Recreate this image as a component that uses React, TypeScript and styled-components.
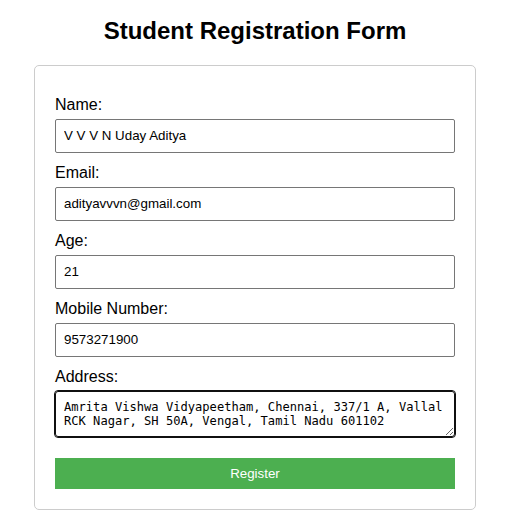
import React from "react";
import styled, { createGlobalStyle } from "styled-components";

const GlobalStyle = createGlobalStyle`
  html, body { margin: 0; padding: 0; background: #ffffff; }
  body { font-family: "Liberation Sans", Arial, sans-serif; color: #000; }
  * { box-sizing: border-box; }
`;

const Page = styled.div`
  padding: 17px 1px 20px 0;
`;

const Title = styled.h2`
  margin: 0 0 20px;
  text-align: center;
  font-size: 24px;
  font-weight: bold;
  line-height: 27.6px;
`;

const Card = styled.form`
  width: 442px;
  margin: 0 auto;
  padding: 20px;
  border: 1px solid #cccccc;
  border-radius: 5px;
  background: #ffffff;
`;

const Label = styled.label`
  display: block;
  margin: 9px 0 5px;
  font-size: 16px;
  line-height: 19px;
`;

const Input = styled.input`
  display: block;
  width: 100%;
  height: 34px;
  margin: 0 0 10px;
  padding: 0 8px;
  border: 1px solid #767676;
  border-radius: 2px;
  font-family: "Liberation Sans", Arial, sans-serif;
  font-size: 13.33px;
  color: #000;
  background: #fff;
  outline: none;
`;

const TextArea = styled.textarea`
  display: block;
  width: 100%;
  height: 46px;
  margin: 0;
  padding: 8px;
  border: 1px solid #101010;
  border-radius: 3px;
  outline: 1px solid #101010;
  outline-offset: 0;
  font-family: "DejaVu Sans Mono", "Liberation Mono", monospace;
  font-size: 12.1px;
  line-height: 14px;
  color: #000;
  background: #fff;
  resize: vertical;
  overflow: hidden;
`;

const Button = styled.button`
  display: block;
  width: 100%;
  margin-top: 21px;
  padding: 8px;
  border: none;
  background: #4caf50;
  color: #ffffff;
  font-family: "Liberation Sans", Arial, sans-serif;
  font-size: 13.33px;
  line-height: 15px;
  cursor: pointer;
`;

type FieldProps = { id: string; label: string; value: string; type?: string };

const Field = ({ id, label, value, type = "text" }: FieldProps) => (
  <>
    <Label htmlFor={id}>{label}</Label>
    <Input id={id} type={type} defaultValue={value} />
  </>
);

export default function App() {
  return (
    <Page>
      <GlobalStyle />
      <Title>Student Registration Form</Title>
      <Card onSubmit={(e) => e.preventDefault()}>
        <Field id="name" label="Name:" value="V V V N Uday Aditya" />
        <Field id="email" label="Email:" value="adityavvvn@gmail.com" type="email" />
        <Field id="age" label="Age:" value="21" type="number" />
        <Field id="mobile" label="Mobile Number:" value="9573271900" type="tel" />
        <Label htmlFor="address">Address:</Label>
        <TextArea
          id="address"
          defaultValue="Amrita Vishwa Vidyapeetham, Chennai, 337/1 A, Vallal RCK Nagar, SH 50A, Vengal, Tamil Nadu 601102"
        />
        <Button type="submit">Register</Button>
      </Card>
    </Page>
  );
}
